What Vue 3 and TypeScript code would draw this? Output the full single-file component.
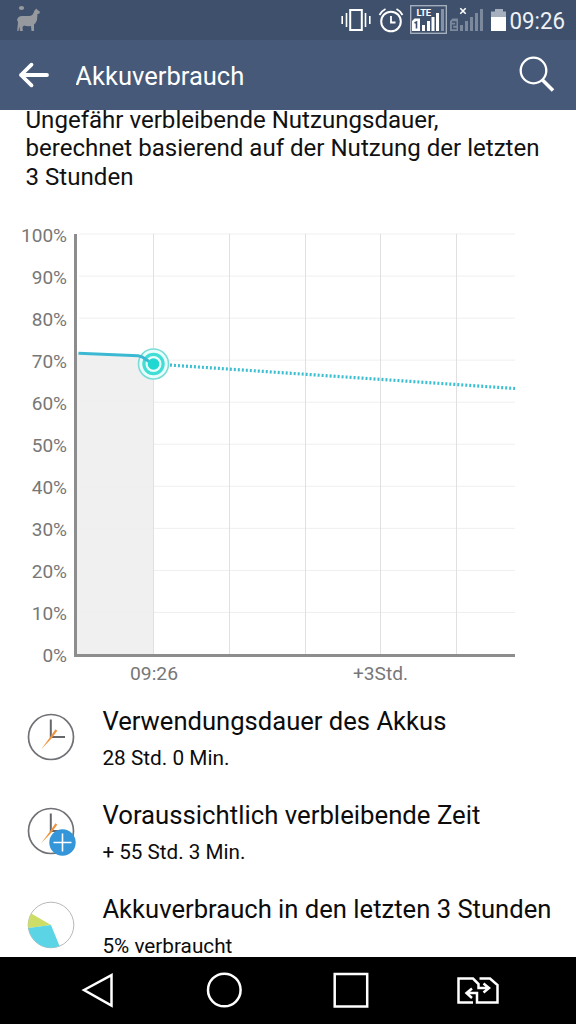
<script setup lang="ts">
interface Entry {
  icon: 'clock' | 'clock-plus' | 'pie'
  title: string
  detail: string
  titleWidth: number
  detailWidth: number
}

const intro = [
  { text: 'Ungefähr verbleibende Nutzungsdauer,', width: 413 },
  { text: 'berechnet basierend auf der Nutzung der letzten', width: 514 },
  { text: '3 Stunden', width: 108 },
]

const entries: Entry[] = [
  { icon: 'clock', title: 'Verwendungsdauer des Akkus', detail: '28 Std. 0 Min.', titleWidth: 344, detailWidth: 127 },
  { icon: 'clock-plus', title: 'Voraussichtlich verbleibende Zeit', detail: '+ 55 Std. 3 Min.', titleWidth: 378, detailWidth: 143 },
  { icon: 'pie', title: 'Akkuverbrauch in den letzten 3 Stunden', detail: '5% verbraucht', titleWidth: 449, detailWidth: 130 },
]

const levels = Array.from({ length: 11 }, (_, i) => ({ label: `${100 - i * 10}%`, y: 24 + i * 42.05 }))
const columns = [153.5, 229.5, 305.5, 380.5, 456.5]
</script>

<template>
  <div class="screen">
    <header>
      <div class="status">
        <svg width="576" height="40" viewBox="0 0 576 40">
          <g fill="#969a9e">
            <ellipse cx="21.500" cy="8" rx="2.600" ry="2" />
            <path d="M17 20Q18 16 22 16H29Q32.500 16 33.500 13L34.500 10.500L36.500 8.500L37.500 10L39.800 11.500L39.500 13.500L37.500 14L37 20Q36 23 34 24.500V31H31.500L31 26Q27 26.500 24 25.500L22.500 27L22.800 31H20L19.300 26.500L18.500 31H17.200L18 22Z" />
          </g>
          <g fill="none" stroke="#fff">
            <rect x="350.200" y="10" width="11.600" height="20" stroke-width="2" />
            <path d="M346.500 13v14M365.500 13v14M342.200 16v8M369.800 16v8" stroke-width="1.600" />
            <circle cx="391" cy="21.500" r="9.800" stroke-width="2" />
            <path d="M391 16v6.500h4.500" stroke-width="1.800" />
            <path d="M379.500 15q2-4 6-6M402.500 15q-2-4-6-6" stroke-width="1.800" />
          </g>
          <rect x="410.700" y="5.700" width="35.600" height="27.600" fill="none" stroke="#aab3c2" stroke-width="1.300" />
          <text x="416.500" y="16.300" class="lte" textLength="14.500">LTE</text>
          <path fill="#fff" d="M412 21l2.500-2.500h5.500v12.500h-8zM422 25h3v6h-3zM427 21h3v10h-3zM431.500 17h3v14h-3zM436 13h3v18h-3z" />
          <path fill="#8591a5" d="M441 9h3v22h-3z" />
          <path d="M414.500 23l2-1v6.500" fill="none" stroke="#3f506c" stroke-width="1.600" />
          <path fill="#7c889c" d="M450 21l2.500-2.500h5.500v12.500h-8zM460 25h3v6h-3zM465 21h3v10h-3zM470 17h3v14h-3zM475 13h3v18h-3zM480 9h3v22h-3z" />
          <path d="M452 22h3.800v3.200h-3.300v3.300h4" fill="none" stroke="#3f506c" stroke-width="1.300" />
          <path d="M460.300 8.300l5.400 5.400m0-5.400l-5.400 5.400" stroke="#fff" stroke-width="1.600" />
          <path fill="#a6afbd" d="M495 9h8v2.500h3v6h-15v-6h4z" />
          <path fill="#fff" d="M491 17h15v14h-15z" />
          <text x="509.500" y="29" class="time" textLength="55.500" lengthAdjust="spacingAndGlyphs">09:26</text>
        </svg>
      </div>
      <div class="bar">
        <svg class="back" width="32" height="28" viewBox="0 0 32 28" fill="none" stroke="#fff" stroke-width="3.800" stroke-linecap="round" stroke-linejoin="round">
          <path d="M29 14H3M13.500 3.700L3 14l10.500 10.300" />
        </svg>
        <h1><svg width="180" height="40"><text x="-.7" y="30" textLength="169" lengthAdjust="spacingAndGlyphs">Akkuverbrauch</text></svg></h1>
        <svg class="search" width="38" height="38" viewBox="0 0 38 38" fill="none" stroke="#fff">
          <circle cx="15.500" cy="15.500" r="12.800" stroke-width="2.300" />
          <path d="M24.500 25L35 35.500" stroke-width="3.500" />
        </svg>
      </div>
    </header>

    <main>
      <svg class="intro" width="576" height="90">
        <text v-for="(line, i) in intro" :key="i" x="25.500" :y="17.500 + i * 28.500" :textLength="line.width" lengthAdjust="spacingAndGlyphs">{{ line.text }}</text>
      </svg>

      <svg class="chart" width="576" height="480" viewBox="0 0 576 480">
        <path d="M77 143L140 145.500L154 154V445H77z" fill="#f0f0f0" />
        <line v-for="l in levels.slice(0, 10)" :key="l.y" x1="79" x2="515" :y1="l.y" :y2="l.y" stroke="#efefef" />
        <line v-for="x in columns" :key="x" :x1="x" :x2="x" y1="24" y2="444" stroke="#e0e0e0" />
        <path d="M75.500 24V445.500H515" fill="none" stroke="#8d8d8d" stroke-width="3" />
        <text v-for="l in levels" :key="l.label" x="67" :y="l.y + 7.500" text-anchor="end">{{ l.label }}</text>
        <text x="130" y="470" textLength="48" lengthAdjust="spacingAndGlyphs">09:26</text>
        <text x="353" y="470" textLength="55" lengthAdjust="spacingAndGlyphs">+3Std.</text>
        <path d="M154 154L515 178.500" stroke="#3bbfd0" stroke-width="3.200" stroke-dasharray="2 2" />
        <circle cx="153.500" cy="154" r="15" fill="#e9fdfc" stroke="#7bdcd6" stroke-width="1.600" />
        <circle cx="153.500" cy="154" r="9.600" fill="#e9fffc" stroke="#40ded5" stroke-width="3.200" />
        <path d="M78.500 143.300L138 145.700Q142 146 146 149.500L153 154" fill="none" stroke="#3cb9d2" stroke-width="3" />
        <circle cx="153.500" cy="154" r="5.800" fill="#20d8d2" />
      </svg>

      <section v-for="entry in entries" :key="entry.title" class="entry">
        <svg class="icon" width="54" height="54" viewBox="0 0 54 54" fill="none">
          <template v-if="entry.icon !== 'pie'">
            <circle cx="26" cy="27" r="22.500" stroke="#707176" stroke-width="1.700" />
            <path d="M25.800 9.500V27H40" stroke="#66676b" stroke-width="2" />
            <path d="M16 39.500L25 27.200L30.500 19.200L32.300 20.700L26.500 28.400Z" fill="#ed943f" />
          </template>
          <template v-if="entry.icon === 'clock-plus'">
            <circle cx="37.500" cy="38.500" r="13.200" fill="#3495d8" />
            <path d="M28.500 38.500h18M37.500 29.500v18" stroke="#fff" stroke-width="1.600" />
          </template>
          <template v-if="entry.icon === 'pie'">
            <circle cx="26" cy="27" r="22.800" stroke="#999" stroke-width=".7" />
            <path d="M26 27L6.300 15.500A22.800 22.800 0 0 0 3.400 30Z" fill="#cddd66" />
            <path d="M26 27L3.400 30A22.800 22.800 0 0 0 34.500 48.100Z" fill="#5bd5e6" />
          </template>
        </svg>
        <svg class="copy" width="470" height="94">
          <text class="title" x=".4" y="28" :textLength="entry.titleWidth" lengthAdjust="spacingAndGlyphs">{{ entry.title }}</text>
          <text class="detail" x=".4" y="63" :textLength="entry.detailWidth" lengthAdjust="spacingAndGlyphs">{{ entry.detail }}</text>
        </svg>
      </section>
    </main>

    <nav>
      <svg width="576" height="67" viewBox="0 0 576 67" fill="none" stroke="#fff" stroke-width="2.500">
        <path d="M84 33L111.500 18.200V48.500Z" />
        <circle cx="224.300" cy="33" r="16.300" />
        <rect x="334.700" y="17" width="32.500" height="32.500" />
        <path d="M473 45.500H458.500V21.500H473L478.500 27V31H489M483.500 26.500L489 31L483.500 35.500M479.500 21.500H490L497.500 28V45.500H477V36H467M472 31.500L466.500 36L472 41" />
      </svg>
    </nav>
  </div>
</template>

<style scoped>
.screen {
  width: 576px;
  height: 1024px;
  display: flex;
  flex-direction: column;
  overflow: hidden;
  background: #fff;
  font-family: Roboto, "Liberation Sans", sans-serif;
}
svg { display: block; flex-shrink: 0; }
header { flex: 0 0 110px; background: #465978; }
.status { height: 40px; background: #3f506c; }
.lte { font-size: 9.5px; font-weight: 700; fill: #fff; }
.time { font-size: 24px; fill: #eef1f5; }
.bar { height: 70px; display: flex; align-items: center; }
.back { margin-left: 18px; }
h1 { margin: 0 0 0 26px; font-size: 25px; font-weight: 400; fill: #fff; }
.search { margin-left: auto; margin-right: 20px; margin-bottom: 2px; }
main { flex: 1; min-height: 0; overflow: hidden; }
.intro { font-size: 24px; fill: #111; }
.chart { margin-top: 10px; font-size: 19px; fill: #777; }
.entry { height: 94px; display: flex; fill: #0c0c0c; }
.entry:first-of-type { margin-top: 13px; }
.icon { margin: 7px 0 0 25px; }
.copy { margin-left: 23px; margin-top: -1px; }
.title { font-size: 25px; }
.detail { font-size: 20px; }
nav { flex: 0 0 67px; background: #000; }
</style>

<style>
body { margin: 0; }
</style>
